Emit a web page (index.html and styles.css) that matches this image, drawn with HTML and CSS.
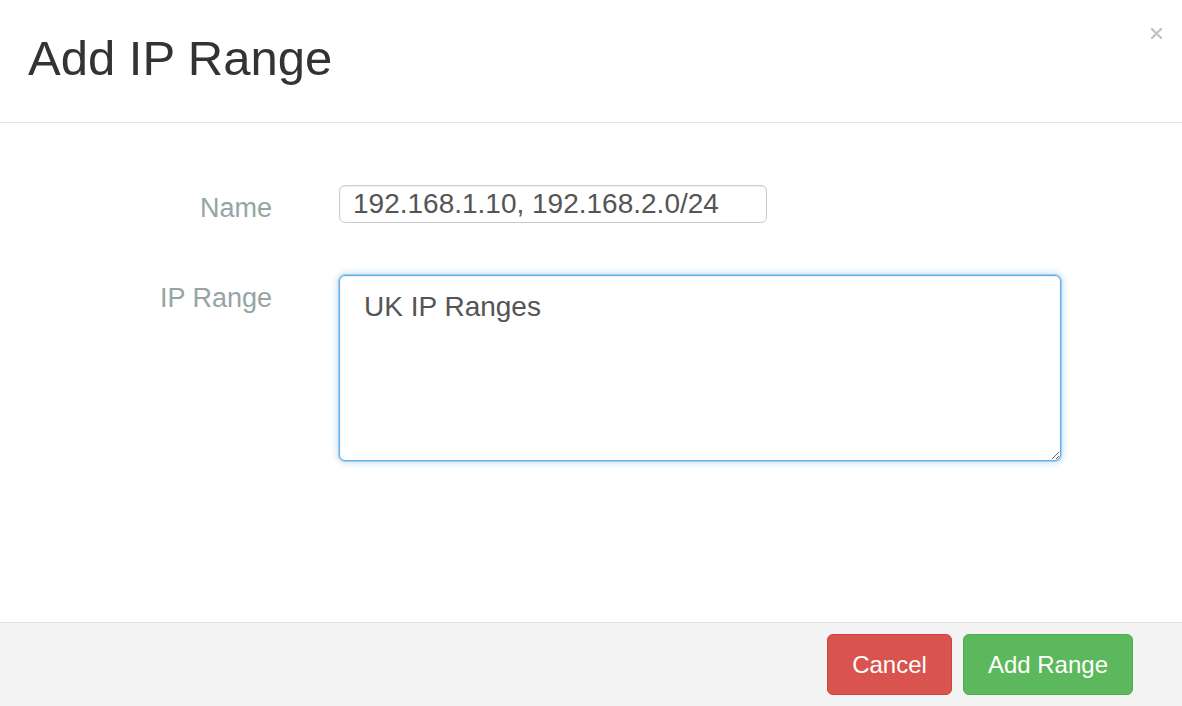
FILE: index.html
```html
<!DOCTYPE html>
<html lang="en">
<head>
<meta charset="utf-8">
<title>Add IP Range</title>
<link rel="stylesheet" href="styles.css">
</head>
<body>
<div class="modal">
  <div class="modal-header">
    <h4 class="modal-title">Add IP Range</h4>
    <button class="close" type="button" aria-label="Close">
      <svg width="11" height="11" viewBox="0 0 11 11"><path d="M1 1 L10 10 M10 1 L1 10" stroke="#c4c4c4" stroke-width="2.4" stroke-linecap="square"/></svg>
    </button>
  </div>
  <div class="modal-body">
    <form class="form">
      <label class="label" for="name">Name</label>
      <div class="field"><input id="name" class="input" type="text" value="192.168.1.10, 192.168.2.0/24"></div>
      <label class="label" for="range">IP Range</label>
      <div class="field"><textarea id="range" class="textarea">UK IP Ranges</textarea></div>
    </form>
  </div>
  <div class="modal-footer">
    <button class="btn btn-danger" type="button">Cancel</button>
    <button class="btn btn-success" type="button">Add Range</button>
  </div>
</div>
</body>
</html>
```
FILE: styles.css
```css
html, body {
  margin: 0;
  padding: 0;
  background: #fff;
}
body {
  font-family: "Liberation Sans", Arial, sans-serif;
  color: #333;
}
.modal {
  position: relative;
  display: flex;
  flex-direction: column;
  height: 706px;
  width: 1182px;
  background: #fff;
}
.modal-header {
  padding: 34px 28px 39px;
  border-bottom: 1px solid #e5e5e5;
}
.modal-title {
  margin: 0;
  font-size: 49px;
  line-height: 49px;
  font-weight: normal;
  color: #333;
}
.close {
  position: absolute;
  top: 28px;
  right: 20px;
  padding: 0;
  border: 0;
  background: transparent;
  width: 11px;
  height: 11px;
  display: flex;
}
.modal-body {
  flex: 1;
  padding-top: 62px;
}
.form {
  display: grid;
  grid-template-columns: 272px 1fr;
  column-gap: 67px;
  row-gap: 48px;
  margin: 0;
}
.label {
  text-align: right;
  font-size: 27px;
  line-height: 38px;
  padding-top: 4px;
  color: #95a5a6;
}
.field {
  display: flex;
  align-items: flex-start;
}
.input {
  box-sizing: border-box;
  width: 428px;
  height: 38px;
  padding: 0 13px;
  border: 1px solid #cccccc;
  border-radius: 6px;
  font-family: "Liberation Sans", Arial, sans-serif;
  font-size: 28px;
  color: #555;
  background: #fff;
  box-shadow: inset 0 1px 1px rgba(0,0,0,.075);
  outline: none;
}
.textarea {
  box-sizing: border-box;
  width: 722px;
  height: 186px;
  padding: 11px 24px;
  border: 1px solid #66afe9;
  border-radius: 6px;
  font-family: "Liberation Sans", Arial, sans-serif;
  font-size: 28px;
  line-height: 40px;
  color: #555;
  background: #fff;
  box-shadow: inset 0 1px 1px rgba(0,0,0,.075), 0 0 0 1px rgba(102,175,233,.5), 0 0 9px rgba(102,175,233,.6);
  outline: none;
  resize: both;
}
.modal-footer {
  display: flex;
  justify-content: flex-end;
  gap: 11px;
  padding: 11px 49px 11px;
  border-top: 1px solid #dedede;
  background: #f4f4f4;
}
.btn {
  box-sizing: border-box;
  height: 61px;
  padding: 0 24px;
  border: 1px solid transparent;
  border-radius: 6px;
  font-family: "Liberation Sans", Arial, sans-serif;
  font-size: 24px;
  color: #fff;
  cursor: pointer;
}
.btn-danger {
  background: #d9534f;
  border-color: #d43f3a;
}
.btn-success {
  background: #5cb85c;
  border-color: #4cae4c;
}
```
